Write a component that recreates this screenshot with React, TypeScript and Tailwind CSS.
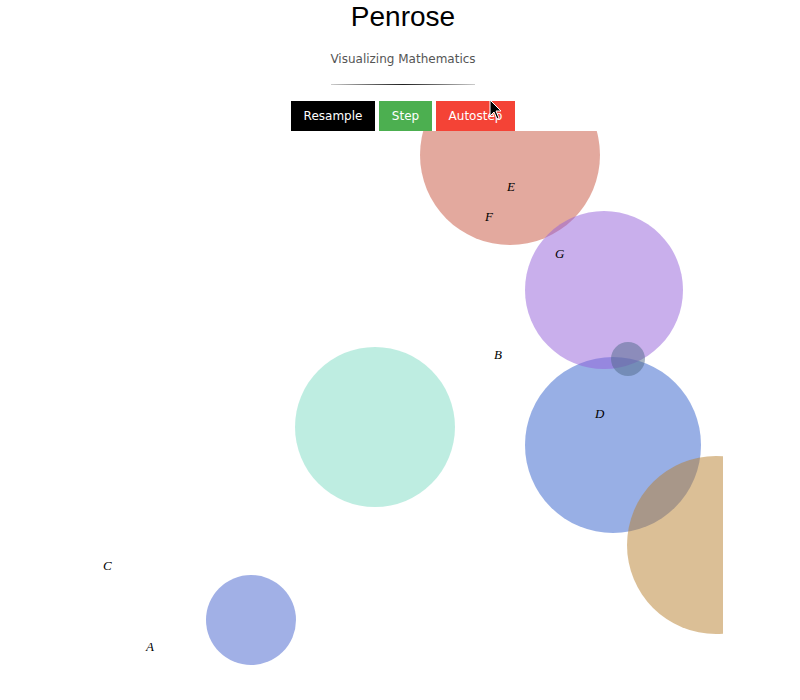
import React from "react";

const circles = [
  { cx: 510, cy: 24, r: 90, fill: "#c7533d", o: 0.5 },
  { cx: 375, cy: 296, r: 80, fill: "#7ddbc3", o: 0.5 },
  { cx: 251, cy: 489, r: 45, fill: "#4361cd", o: 0.5 },
  { cx: 613, cy: 314, r: 88, fill: "#315fcb", o: 0.5 },
  { cx: 716, cy: 414, r: 89, fill: "#b77f2d", o: 0.5 },
  { cx: 604, cy: 159, r: 79, fill: "#935fd9", o: 0.5 },
  { cx: 628, cy: 228, r: 17, fill: "#4f6a8a", o: 0.5 },
];

const labels = [
  { t: "E", x: 507, y: 60 },
  { t: "F", x: 485, y: 90 },
  { t: "G", x: 555, y: 127 },
  { t: "B", x: 494, y: 228 },
  { t: "D", x: 595, y: 287 },
  { t: "C", x: 103, y: 439 },
  { t: "A", x: 146, y: 520 },
];

export default function App() {
  return (
    <div className="relative w-[800px] h-[700px] bg-white overflow-hidden">
      <div className="flex flex-col items-center pl-[6px]">
        <h1 className="mt-[1px] text-[28px] leading-[32px] text-black font-['Liberation_Sans',sans-serif]">
          Penrose
        </h1>
        <p className="mt-[19px] text-[12px] leading-[14px] text-[#555] font-['DejaVu_Sans',sans-serif]">
          Visualizing Mathematics
        </p>
        <div className="mt-[18px] w-[144px] h-px bg-gradient-to-r from-[#ccc] via-[#222] to-[#ccc]" />
        <div className="mt-[16px] flex gap-[4px] font-['DejaVu_Sans',sans-serif] text-[12px] text-white [text-shadow:0_0_0.4px_#fff]">
          <button className="w-[84px] h-[30px] bg-black">Resample</button>
          <button className="w-[53px] h-[30px] bg-[#4caf50]">Step</button>
          <button className="w-[79px] h-[30px] bg-[#f44336]">Autostep</button>
        </div>
      </div>
      <svg width="723" height="569" className="block">
        {circles.map((c, i) => (
          <circle key={i} cx={c.cx} cy={c.cy} r={c.r} fill={c.fill} fillOpacity={c.o} />
        ))}
        {labels.map((l) => (
          <text
            key={l.t}
            x={l.x}
            y={l.y}
            fontSize="13"
            fontStyle="italic"
            fontFamily="'Liberation Serif', serif"
            fill="#000"
          >
            {l.t}
          </text>
        ))}
      </svg>
      <svg
        className="absolute left-[489px] top-[99px]"
        width="14"
        height="22"
        viewBox="0 0 14 22"
      >
        <path d="M1 1 L1 17 L5 13 L8 20 L10 19 L7 12 L12 12 Z" fill="#000" stroke="#fff" strokeWidth="1" />
      </svg>
    </div>
  );
}
